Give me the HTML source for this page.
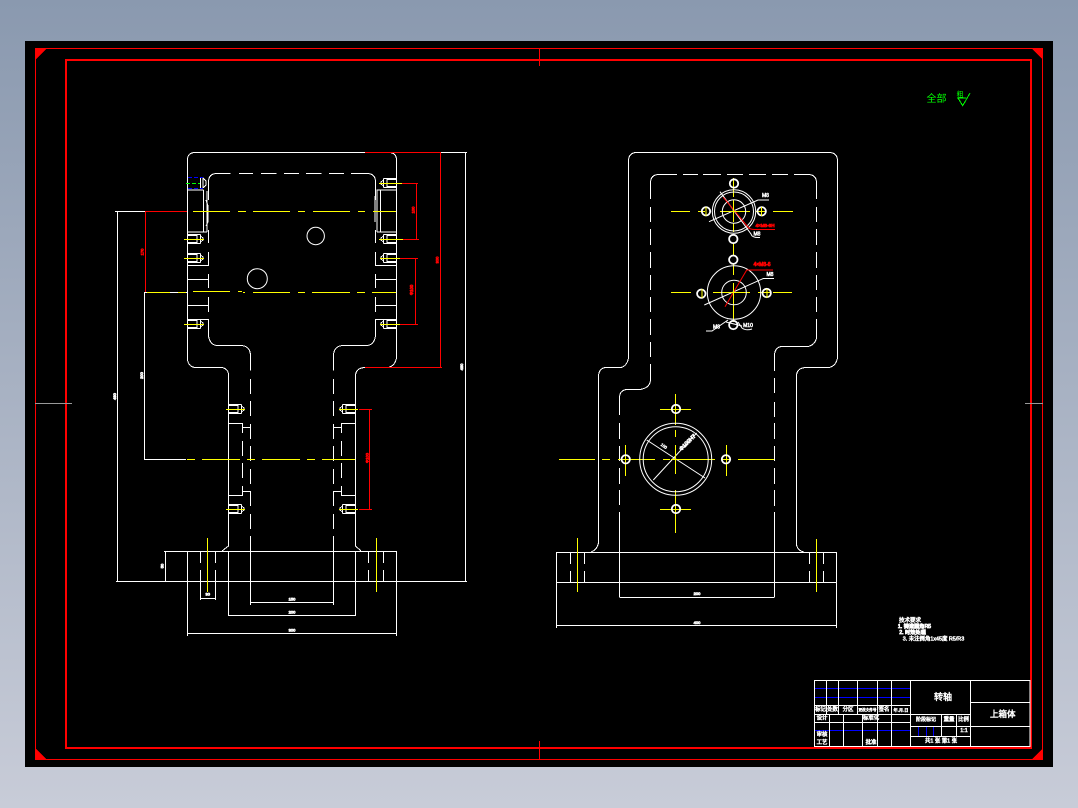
<!DOCTYPE html>
<html><head><meta charset="utf-8"><title>上箱体</title>
<style>
html,body{margin:0;padding:0;width:1078px;height:808px;overflow:hidden;background:linear-gradient(#8a99af,#c8ccd8)}
svg{display:block;position:absolute;left:0;top:0}
text{font-family:"Liberation Sans","Noto Sans CJK SC",sans-serif;text-anchor:middle;dominant-baseline:central}
.w{fill:#fff;stroke:#fff;stroke-width:.5}
.r{fill:#f00;stroke:#f00;stroke-width:.5}
.d{stroke-width:.8}
.g{fill:#0f0}
</style></head><body>
<svg width="1078" height="808" viewBox="0 0 1078 808" xmlns="http://www.w3.org/2000/svg">
<defs>
<g id="bolt" fill="none" stroke="#fff"><path d="M0-4.5H13M0-3.5H10M0 3.5H10M0 4.5H13M9.5-4.5V4.5M13-4.5V4.5M13-3L15.5-1V1L13 3"/></g>
<g id="hole"><circle r="4.2" fill="none" stroke="#fff" stroke-width="1.8"/></g>
</defs>
<rect x="25" y="41" width="1028" height="726" fill="#000"/>
<g shape-rendering="crispEdges" fill="none">
<!-- frame -->
<rect x="35.5" y="48.5" width="1007" height="711" stroke="#f00"/>
<rect x="66" y="60" width="965" height="688" stroke="#f00" stroke-width="2.4"/>
<path d="M35 48H47L35 60ZM1043 48H1031L1043 60ZM35 760H47L35 748ZM1043 760H1031L1043 748Z" fill="#f00"/>
<path d="M539.5 48V66M539.5 741V759" stroke="#f00"/>
<path d="M35 403.5H72M1025 403.5H1043" stroke="#999"/>

<!-- LEFT VIEW outline -->
<path stroke="#fff" d="M187.5 360V160Q187.5 152.5 195 152.5H365M396.5 160Q396.5 152.5 389 152.5H365M187.5 360Q189 367.5 196 367.5H222Q228.5 369 228.5 375V546L222 551M396.5 160V358Q395 366 388 367.5M365 367.5Q355.5 368 355.5 376V546L361 551"/>
<!-- inner dashed -->
<path stroke="#fff" d="M208.5 200V182Q208.5 173.5 217 173.5H230.5M239 173.5H253M261 173.5H276.5M284 173.5H299M306 173.5H321.5M329 173.5H344M351 173.5H367Q375.5 173.5 375.5 182V199M208.5 230V243M208.5 252V266M208.5 274V288M208.5 297V312M208.5 319V336Q210 345 217 345.5H241Q250.5 346 250.5 356V370.5M375.5 192V200M375.5 230V243M375.5 252V266M375.5 274V288M375.5 297V312M375.5 319V336Q374 345 367 345.5H343Q333.5 346 333.5 356V370.5M250.5 379V394M250.5 401V416M250.5 424V439M250.5 446V461M250.5 469V484M250.5 491V506M250.5 514V529M250.5 536V605M333.5 379V394M333.5 401V416M333.5 424V439M333.5 446V461M333.5 469V484M333.5 491V506M333.5 514V529M333.5 536V605"/>
<!-- recess left/right -->
<path stroke="#fff" d="M187 190H203.5M203.5 190V232M207 191V232M187 232H207M206 200L208 206V222L206 226M396 190H380.5V232H396M380.5 232H377M380.5 190H377V232M375 196V222"/>
<path stroke="#fff" d="M187 265.5H208.5M187 279.5H208.5M187 305.5H208.5M187 319.5H208.5M375.5 265.5H396M375.5 279.5H396M375.5 305.5H396M375.5 319.5H396"/>
<!-- bolts -->
<use href="#bolt" x="187.5" y="239"/><use href="#bolt" x="187.5" y="258"/><use href="#bolt" x="187.5" y="324"/>
<path stroke="#00f" d="M188 177.5H203M188 188.5H203" stroke-dasharray="4 2"/>
<path stroke="#fff" d="M200.5 178V188M203 178V188M203 178L206 181V185L203 188"/>
<g transform="translate(396.5,0) scale(-1,1)"><use href="#bolt" y="183"/><use href="#bolt" y="239"/><use href="#bolt" y="258"/><use href="#bolt" y="324"/></g>
<use href="#bolt" x="228.5" y="409"/><use href="#bolt" x="228.5" y="509"/>
<g transform="translate(355.5,0) scale(-1,1)"><use href="#bolt" y="409"/><use href="#bolt" y="509"/></g>
<path stroke="#0f0" d="M186 183.5H200" stroke-dasharray="4 2"/>
<!-- steps -->
<path stroke="#fff" d="M228.5 423.5H242.5V433M242.5 427.5H250.5M242.5 441V456M242.5 463V478M242.5 486V495.5H228.5M242.5 491.5H250.5M355.5 423.5H341.5V433M341.5 427.5H333.5M341.5 441V456M341.5 463V478M341.5 486V495.5H355.5M341.5 491.5H333.5"/>
<!-- holes in body -->
<g stroke="#fff" shape-rendering="auto"><circle cx="315.7" cy="236" r="8.7"/><circle cx="257.3" cy="278.7" r="10"/></g>
<!-- base -->
<path stroke="#fff" d="M164 551.5H396.5M187.5 551V636M396.5 551V636M165.5 552V581M116 581.5H467M200.5 551V563M200.5 570V600M215.5 551V563M215.5 570V600M200.5 598.5H215.5M368.5 551V563M368.5 570V581M383.5 551V563M383.5 570V581M250.5 602.5H333.5M228.5 551V616M355.5 551V616M228.5 615.5H355.5M187.5 633.5H396.5"/>
<!-- dims white -->
<path stroke="#fff" d="M440 152.5H467M465.5 152V581M117.5 211V581M115 211.5H145M144.5 292V459.5M144 459.5H186M144 292.5H187"/>
<!-- dims red -->
<path stroke="#f00" d="M365 152.5H441M440.5 152V367M365 367.5H442M145 211.5H187M145.5 211V292M402 183.5H418M416.5 183V239M403 239.5H419M400 258.5H418M415.5 258V324M400 324.5H418M359 409.5H372M369.5 409V509M359 509.5H372"/>
<!-- yellow -->
<path stroke="#ff0" d="M184 239.5H204M184 258.5H204M184 324.5H204M379 183.5H402M379 239.5H403M380 258.5H400M380 324.5H400M226 409.5H245M226 509.5H245M339 409.5H358M339 509.5H358M193 211.5H230M238 211.5H246M253 211.5H290M298 211.5H305M313 211.5H350M358 211.5H365M373 211.5H396M147 292.5H170M178 292.5H186M193 291.5H230M238 291.5H242M243 292.5H245M253 292.5H290M298 292.5H305M312 292.5H350M357 292.5H365M372 292.5H396M187 459.5H195M202 459.5H240M247 459.5H255M262 459.5H300M307 459.5H315M322 459.5H355M207.5 538V592M376.5 538V592"/>

<!-- RIGHT VIEW -->
<path stroke="#fff" d="M628.5 358V161Q628.5 152.5 637 152.5H829Q837.5 152.5 837.5 161V358Q836 366 829 367.5H806Q796.5 368 796.5 376V545Q798 551 804 552M628.5 358Q627 366 621 367.5H606Q598.5 368 598.5 377V543Q597 550 591 552"/>
<path stroke="#fff" d="M650.5 199V183Q650.5 174.5 659 174.5H677M683 174.5H698M703 174.5H721M727 174.5H743M749 174.5H766M772 174.5H788M794 174.5H808Q816.5 174.5 816.5 183V199M650.5 207V222M650.5 229V245M650.5 252V268M650.5 275V290M650.5 297V312M650.5 319V335M650.5 342V357M650.5 364V380Q650 388 640 389.5H627Q619.5 390 619.5 398V415M816.5 207V222M816.5 229V245M816.5 252V268M816.5 275V290M816.5 297V312M816.5 319V338Q815 345 808 346.5H782Q774.5 347 774.5 356V371M774.5 378V393M774.5 402V417M774.5 423V439M774.5 446V461M774.5 468V484M774.5 490V506M774.5 512V597M619.5 423V439M619.5 446V461M619.5 468V484M619.5 490V505M619.5 512V552M619.5 552V597"/>
<!-- right base -->
<path stroke="#fff" d="M556.5 552.5H836.5M556.5 582.5H836.5M556.5 552V628M836.5 552V628M556.5 625.5H836.5M619.5 597.5H774.5M570.5 552V564M570.5 571V582M584.5 552V564M584.5 571V582M809.5 552V564M809.5 571V582M823.5 552V564M823.5 571V582"/>
<!-- yellow right -->
<path stroke="#ff0" d="M577.5 538V592M816.5 539V592M559 459.5H595M602 459.5H610M618 459.5H655M663 459.5H670M675 459.5H715M721 459.5H731M738 459.5H774M660 409.5H691M660 509.5H691M675.5 394V425M675.5 430V437M675.5 445V474M675.5 490V497M675.5 497V533M625.5 445V476M726.5 445V476M671 211.5H690M698 211.5H705M720 211.5H750M756 211.5H766M773 211.5H793M733.5 178V197M733.5 200V222M733.5 223V232M733.5 243V255M733.5 263V275M733.5 283V305M733.5 300V322M671 292.5H691M713 292.5H750M758 292.5H770M773 292.5H792"/>
<!-- circles -->
<g stroke="#fff" shape-rendering="auto">
<circle cx="675.7" cy="459.3" r="36"/><circle cx="675.7" cy="459.3" r="32.5"/>
<circle cx="734" cy="211.5" r="21.7"/><circle cx="734" cy="211.5" r="19.5"/><circle cx="734" cy="211.5" r="11.7"/>
<circle cx="734" cy="292.5" r="26.7"/><circle cx="734" cy="292.5" r="12.3"/>
<path d="M646.7 440L705 478M653.3 480L696.7 433M709 221.7L758 200H769M720 191.7L751 234Q752 238 760 237.5M704.3 305L763.3 278.5H774M728 320L712 331H706M738 322L742 328Q746 331 752 329M726 322L742 326"/>
<use href="#hole" x="676" y="409"/><use href="#hole" x="676" y="509"/><use href="#hole" x="625.7" y="459.3"/><use href="#hole" x="726" y="459.3"/>
<use href="#hole" x="734" y="183.5"/><use href="#hole" x="706" y="211.3"/><use href="#hole" x="761.7" y="211.3"/><use href="#hole" x="733.3" y="239"/>
<use href="#hole" x="733.3" y="259.7"/><use href="#hole" x="701.3" y="293.7"/><use href="#hole" x="766.7" y="293"/><use href="#hole" x="733.3" y="325"/>
<path stroke="#f00" d="M723.3 197.3L748.3 227.5Q750 229.5 755 229.5H775M725 306.7L746.7 270H773"/>
<path stroke="#ff0" d="M671 459.5H680M675.5 455V464M728 211.5H740M733.5 206V217M728 292.5H740M733.5 287V298M702 289V298M706 207V216M761.5 207V216M767 289V298"/>
</g>

<!-- Title block -->
<path stroke="#00f" d="M814 688.5H910M814 697.5H910M814 730.5H910M918.5 726V736M926.5 726V736M933.5 726V736"/>
<path stroke="#fff" d="M814.5 680.5H1030V746.5H814.5ZM826.5 680V714M838.5 680V714M857.5 680V714M877.5 680V746M891.5 680V746M910.5 680V746M970.5 680V746M829.5 714V746M843.5 714V746M862.5 714V746M814 705.5H910M814 714.5H970M814 722.5H910M910 726.5H1030M910 736.5H970M970 702.5H1030M941.5 714V736M956.5 714V736"/>
</g>

<!-- Title text -->
<text class="w" x="943" y="697" font-size="9">转轴</text>
<text class="w" x="1002.7" y="714" font-size="8.5">上箱体</text>
<g font-size="5.4">
<text class="w" x="820.5" y="710">标记</text><text class="w" x="832.5" y="710">处数</text><text class="w" x="848" y="710">分区</text><text class="w" x="867.5" y="710" font-size="3.6">更改文件号</text><text class="w" x="884" y="710">签名</text><text class="w" x="901" y="710" font-size="4.2">年.月.日</text>
<text class="w" x="822" y="718.5">设计</text><text class="w" x="871" y="718.5">标准化</text><text class="w" x="822" y="735">审核</text><text class="w" x="822" y="743">工艺</text><text class="w" x="871" y="743">批准</text>
<text class="w" x="926" y="720" font-size="5">阶段标记</text><text class="w" x="949" y="720">重量</text><text class="w" x="963.5" y="720">比例</text><text class="w" x="964" y="731">1:1</text><text class="w" x="941" y="741.5">共1 张 第1 张</text>
</g>

<!-- green -->
<text class="g" x="936.5" y="99.5" font-size="10">全部</text>
<text class="g" x="960" y="95" font-size="7">粗</text>
<path d="M957 98H966M958 98L962.7 105.7L970 93" fill="none" stroke="#0f0" stroke-width="1" shape-rendering="crispEdges"/>

<!-- technical notes -->
<text class="w" x="910" y="621" font-size="5.5">技术要求</text>
<text class="w d" x="914.5" y="627" font-size="5.2">1. 铸造圆角R5</text>
<text class="w d" x="912.5" y="633" font-size="5.2">2. 时效处理</text>
<text class="w" x="933.5" y="639.5" font-size="5.4">3. 未注倒角1x45度 R5/R3</text>

<!-- dim text white -->
<g font-size="4">
<text class="w d" x="292" y="599">150</text>
<text class="w d" x="292" y="612">200</text>
<text class="w d" x="292" y="630">300</text>
<text class="w d" x="207.7" y="594">30</text>
<text class="w d" x="162" y="566" transform="rotate(-90 162 566)">50</text>
<text class="w d" x="141.7" y="375.5" transform="rotate(-90 141.7 375.5)">200</text>
<text class="w d" x="114.7" y="396.5" transform="rotate(-90 114.7 396.5)">480</text>
<text class="w d" x="461.5" y="367" transform="rotate(-90 461.5 367)">460</text>
<text class="w d" x="697" y="593.7">200</text>
<text class="w d" x="697" y="622.5">400</text>
<text class="w" x="664" y="446" transform="rotate(35 664 446)">100</text>
<text class="w d" x="688" y="443" font-size="5.5" transform="rotate(-45 688 443)">Φ100H7</text>
<text class="w" x="765.5" y="196" font-size="5">M8</text>
<text class="w" x="757" y="234.5" font-size="5">M8</text>
<text class="w" x="770" y="275" font-size="5">M8</text>
<text class="w" x="716.5" y="327.5" font-size="5">M8</text>
<text class="w" x="748" y="326" font-size="5">M10</text>
<!-- dim text red -->
<text class="r d" x="142" y="252" transform="rotate(-90 142 252)">170</text>
<text class="r d" x="413" y="210" transform="rotate(-90 413 210)">100</text>
<text class="r d" x="411.5" y="290" font-size="4.2" transform="rotate(-90 411.5 290)">Φ100</text>
<text class="r d" x="437" y="260" transform="rotate(-90 437 260)">300</text>
<text class="r d" x="367" y="458" transform="rotate(-90 367 458)">Φ100</text>
<text class="r d" x="765" y="225.5" font-size="4.6">4×M8-6H</text>
<text class="r d" x="762" y="265" font-size="5">4×M8-6</text>
</g>
</svg>
</body></html>
